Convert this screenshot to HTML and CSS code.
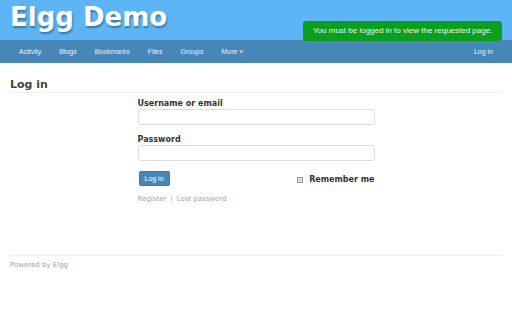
FILE: index.html
```html
<!DOCTYPE html>
<html lang="en">
<head>
  <meta charset="UTF-8">
  <meta name="viewport" content="width=device-width, initial-scale=1.0">
  <title>Log in : Elgg Demo</title>
  <link rel="stylesheet" href="styles.css">
</head>
<body>
  <div class="page">
    <header class="topbar">
      <h1 class="site-name"><a href="/">Elgg Demo</a></h1>
      <div class="system-message">You must be logged in to view the requested page.</div>
    </header>

    <nav class="navbar">
      <div class="nav-left">
        <a href="/activity">Activity</a>
        <a href="/blog/all">Blogs</a>
        <a href="/bookmarks/all">Bookmarks</a>
        <a href="/file/all">Files</a>
        <a href="/groups/all">Groups</a>
        <a href="#">More &raquo;</a>
      </div>
      <div class="nav-right">
        <a href="/login">Log in</a>
      </div>
    </nav>

    <main class="content">
      <h2 class="title">Log in</h2>

      <form class="login-form" action="/action/login" method="post">
        <label class="field-label" for="username">Username or email</label>
        <input class="text-input" type="text" id="username" name="username">

        <label class="field-label" for="password">Password</label>
        <input class="text-input" type="password" id="password" name="password">

        <div class="form-row">
          <button class="login-btn" type="submit">Log in</button>
          <label class="remember">
            <input class="remember-box" type="checkbox" name="persistent">
            Remember me
          </label>
        </div>

        <div class="login-links">
          <a href="/register">Register</a><span class="sep">|</span><a href="/forgotpassword">Lost password</a>
        </div>
      </form>
    </main>

    <footer class="footer">
      Powered by Elgg
    </footer>
  </div>
</body>
</html>
```

FILE: styles.css
```css
/* Reset margin and padding */
* {
  margin: 0;
  padding: 0;
  box-sizing: border-box;
}

body {
  font-family: 'DejaVu Sans', Verdana, sans-serif;
  background-color: #fff;
  color: #333;
}

a {
  text-decoration: none;
}

/* Top header */
.topbar {
  position: relative;
  height: 40px;
  background-color: #5eb5f5;
  padding: 1px 10px 0 10px;
}

.site-name {
  font-size: 26px;
  line-height: 32px;
  font-weight: bold;
}

.site-name a {
  color: #fff;
  text-shadow: 1px 2px 2px rgba(0, 0, 0, 0.35);
}

/* Sits over the header, like Elgg's system messages */
.system-message {
  position: absolute;
  top: 21px;
  right: 10px;
  width: 199px;
  height: 20px;
  padding: 0 10px;
  background-color: #0b9e1f;
  border-radius: 3px;
  color: #eaf6ea;
  font-family: 'Liberation Sans', Arial, sans-serif;
  font-size: 8px;
  line-height: 19px;
  white-space: nowrap;
}

/* Menu bar */
.navbar {
  display: flex;
  justify-content: space-between;
  height: 23px;
  padding: 0 10px;
  background-color: #4787b8;
  font-family: 'Liberation Sans', Arial, sans-serif;
  font-size: 7px;
}

.nav-left,
.nav-right {
  display: flex;
}

.navbar a {
  display: block;
  padding: 0 9px;
  line-height: 24px;
  color: #e8f1f9;
}

/* Main area */
.content {
  padding: 0 10px;
}

.title {
  margin-top: 15px;
  padding-bottom: 1px;
  border-bottom: 1px solid #eee;
  font-size: 11px;
  line-height: 13px;
  color: #444;
}

.login-form {
  width: 237px;
  margin: 6px auto 0 auto;
}

.field-label {
  display: block;
  font-size: 8px;
  line-height: 10px;
  font-weight: bold;
  color: #333;
}

.text-input {
  display: block;
  width: 100%;
  height: 16px;
  margin: 0 0 10px 0;
  border: 1px solid #ddd;
  border-radius: 3px;
  background-color: #fff;
}

.form-row {
  display: flex;
  justify-content: space-between;
  align-items: center;
}

.login-btn {
  margin-left: 1px;
  height: 15px;
  padding: 0 5px;
  background-color: #4787b8;
  border: 1px solid #3d78a6;
  border-radius: 2px;
  color: #fff;
  font-family: 'Liberation Sans', Arial, sans-serif;
  font-size: 7px;
}

.remember {
  display: flex;
  align-items: center;
  gap: 6px;
  margin-top: 2px;
  font-size: 8px;
  font-weight: bold;
  color: #333;
}

.remember-box {
  appearance: none;
  width: 6px;
  height: 6px;
  border: 1px solid #999;
  background-color: #ddd;
}

.login-links {
  margin-top: 8px;
  font-size: 7px;
  line-height: 10px;
  color: #aaa;
}

.login-links a {
  color: #a3a3a3;
}

.login-links .sep {
  margin: 0 4px;
}

/* Footer */
.footer {
  margin: 51px 10px 0 10px;
  padding-top: 4px;
  border-top: 1px solid #eee;
  font-size: 7px;
  line-height: 10px;
  color: #a0a0a0;
}
```
